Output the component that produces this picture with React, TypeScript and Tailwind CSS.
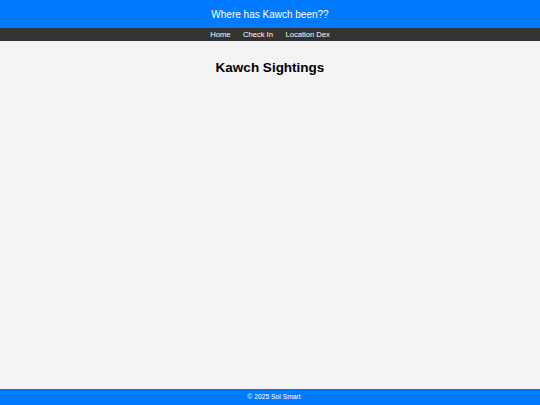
export default function App() {
  return (
    <div className="flex h-[405px] flex-col bg-[#f4f4f4] font-['Liberation_Sans',Arial,sans-serif]">
      <header className="flex h-[28px] items-center justify-center bg-[#007bff] text-[10px] text-white">
        Where has Kawch been??
      </header>
      <nav className="flex h-[13px] items-center justify-center gap-[12.5px] bg-[#333333] text-[7.6px] text-white">
        <span>Home</span>
        <span>Check In</span>
        <span>Location Dex</span>
      </nav>
      <main className="flex-1">
        <h1 className="mt-[17px] text-center text-[13.5px] font-bold text-black">Kawch Sightings</h1>
      </main>
      <footer className="flex h-[16px] items-center justify-center bg-[#007bff] pl-[8px] text-[6.75px] text-white">
        © 2025 Sol Smart
      </footer>
    </div>
  );
}
